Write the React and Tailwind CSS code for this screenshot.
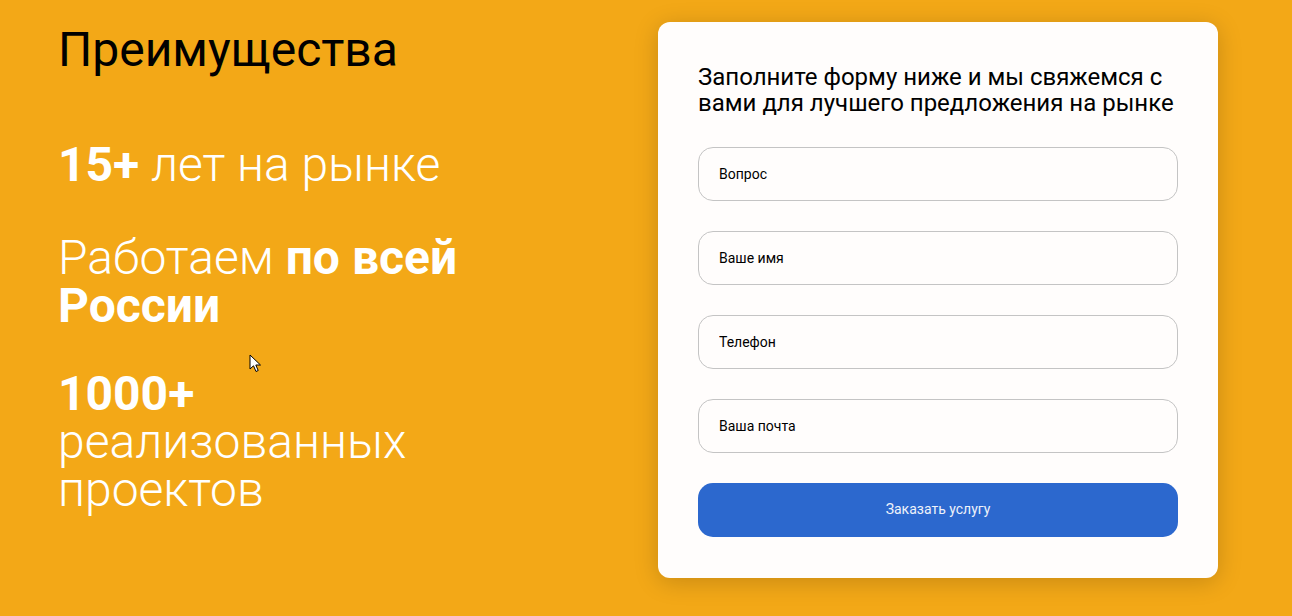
import React from 'react';

const fields = ['Вопрос', 'Ваше имя', 'Телефон', 'Ваша почта'];

function Cursor() {
  return (
    <svg className="absolute left-[249px] top-[354px]" width="13" height="20" viewBox="0 0 13 20">
      <path d="M1 1 L1 15 L4.5 11.8 L7 17.5 L9.2 16.5 L6.8 11 L11.5 11 Z" fill="#fff" stroke="#000" strokeWidth="1" strokeLinejoin="round" />
    </svg>
  );
}

export default function App() {
  return (
    <div
      className="relative flex h-[616px] w-full bg-[#f3a817]"
      style={{ fontFamily: 'Roboto, "Noto Sans", sans-serif' }}
    >
      {/* Left: benefits */}
      <div className="w-[658px] shrink-0 pl-[58px] pt-[26px]">
        <h2 className="text-[48px] leading-[48px] font-normal text-black">Преимущества</h2>

        <div className="mt-[67px] w-[440px] text-[48px] leading-[48px] font-light text-white">
          <p>
            <span className="font-bold">15+</span> лет на рынке
          </p>
          <p className="mt-[45px]">
            Работаем <span className="font-bold">по всей России</span>
          </p>
          <p className="mt-[40px]">
            <span className="font-bold">1000+</span> реализованных проектов
          </p>
        </div>
      </div>

      {/* Right: form card */}
      <div className="mt-[22px] h-[556px] w-[560px] rounded-[12px] bg-[#fffdfc] px-10 pt-[42px] shadow-[0_4px_24px_rgba(0,0,0,0.18)]">
        <p className="text-[24px] leading-[1.1] text-black">
          Заполните форму ниже и мы свяжемся с вами для лучшего предложения на рынке
        </p>
        <form className="mt-[30px] flex flex-col gap-[30px]">
          {fields.map((f) => (
            <input
              key={f}
              placeholder={f}
              className="h-[54px] w-full rounded-[15px] border border-[#c4c4c4] bg-transparent px-5 text-[14px] text-black outline-none placeholder:text-black"
            />
          ))}
          <button
            type="button"
            className="h-[54px] w-full rounded-[15px] bg-[#2c68ce] text-[14px] text-[#eef2fa]"
          >
            Заказать услугу
          </button>
        </form>
      </div>

      <Cursor />
    </div>
  );
}
